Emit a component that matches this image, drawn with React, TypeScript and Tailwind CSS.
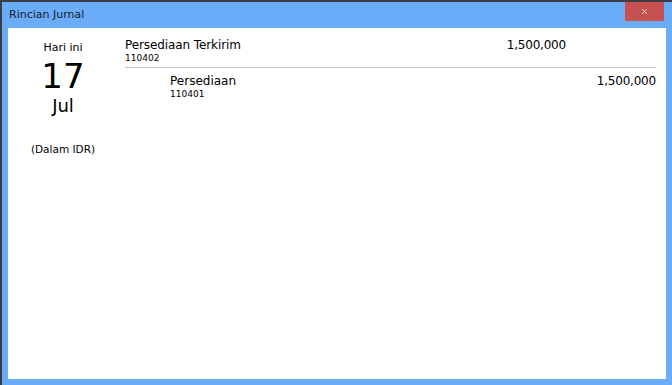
import { X } from "lucide-react";

const font = { fontFamily: '"DejaVu Sans", "Noto Sans", sans-serif' };

export default function App() {
  return (
    <div
      className="relative w-[672px] h-[385px] bg-[#6aacf8] border-l-2 border-t-2 border-[#3b3f45] flex flex-col overflow-hidden"
      style={font}
    >
      <div className="h-[26px] flex items-center pl-[7px] text-[11px] text-[#1a1a2e]">
        Rincian Jurnal
      </div>
      <button className="absolute right-[8px] top-0 w-[39px] h-[19px] bg-[#c75050] flex items-center justify-center text-white">
        <X className="w-[9px] h-[9px]" strokeWidth={2} />
      </button>
      <div className="flex-1 mx-[6px] mb-[6px] bg-white flex">
        <div className="w-[110px] flex flex-col items-center pt-[12px] text-black">
          <div className="text-[11px] leading-[16px]">Hari ini</div>
          <div className="text-[34px] leading-[34px] mt-[3px]">17</div>
          <div className="text-[18px] leading-[22px] mt-[2px]">Jul</div>
          <div className="text-[10.5px] leading-[14px] mt-[25px]">(Dalam IDR)</div>
        </div>
        <div className="flex-1 pr-[10px] pt-[10px] text-black">
          <div className="flex ml-[7px] pr-[90px] border-b border-[#c6c6c6] pb-[4px]">
            <div className="flex-1">
              <div className="text-[12px] leading-[15px] tracking-[-0.1px]">Persediaan Terkirim</div>
              <div className="text-[9px] leading-[10px]">110402</div>
            </div>
            <div className="text-[12px] leading-[15px] tracking-[-0.2px]">1,500,000</div>
          </div>
          <div className="flex pl-[52px] pt-[6px]">
            <div className="flex-1">
              <div className="text-[12px] leading-[15px]">Persediaan</div>
              <div className="text-[9px] leading-[11px]">110401</div>
            </div>
            <div className="text-[12px] leading-[15px] tracking-[-0.2px]">1,500,000</div>
          </div>
        </div>
      </div>
    </div>
  );
}
